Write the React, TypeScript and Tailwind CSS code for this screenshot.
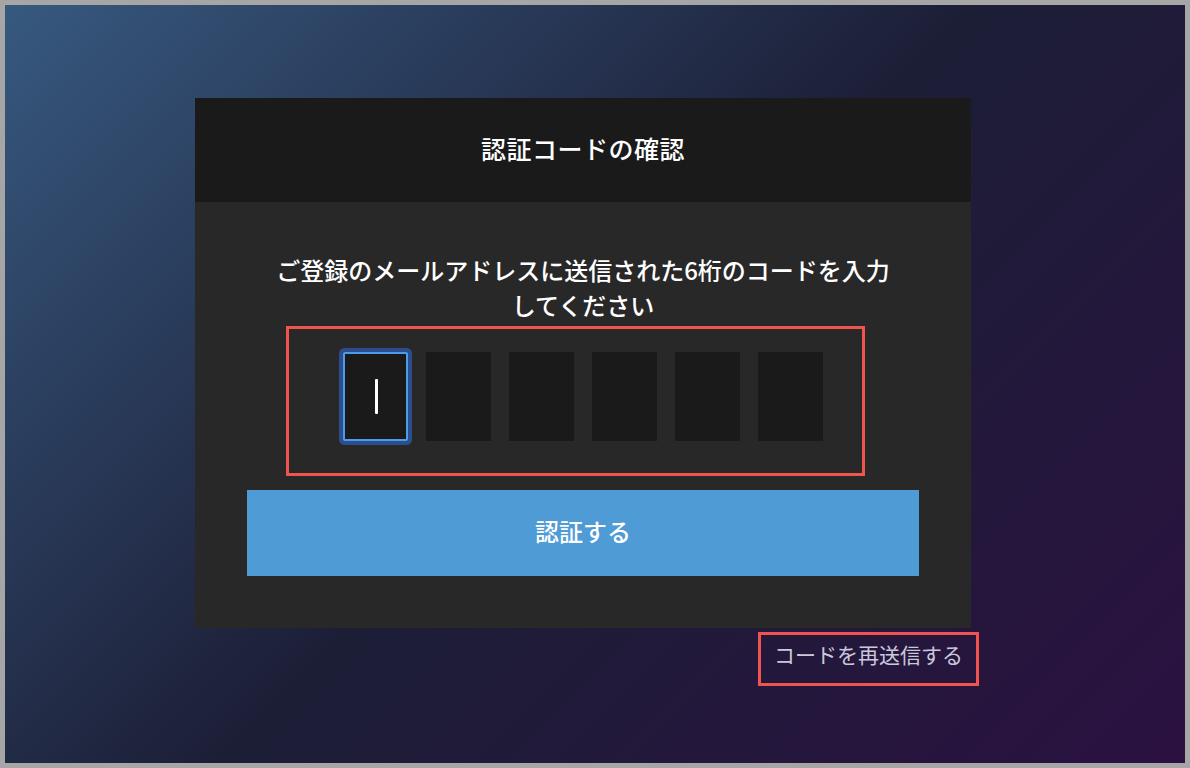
import React from "react";

export default function App() {
  const font = { fontFamily: '"Noto Sans CJK JP", "Noto Sans", sans-serif' };
  return (
    <div className="w-[1190px] h-[768px] bg-[#a6a6a6] p-[5px]" style={font}>
      <div className="w-full h-full bg-[linear-gradient(135deg,#37597f_0%,#1c1e36_50%,#2b1141_100%)] flex flex-col pt-[93px] pl-[190px]">
        <div className="w-[776px] flex flex-col">
          <div className="h-[104px] bg-[#1a1a1a] flex items-center justify-center pb-[4px]">
            <h1 className="text-white text-[25px] font-medium tracking-[0.5px] leading-none">認証コードの確認</h1>
          </div>
          <div className="bg-[#282828] pt-[50px] pb-[52px] px-[52px] flex flex-col items-center">
            <p className="text-white text-[24px] font-medium leading-[35px] text-center w-[630px]">
              ご登録のメールアドレスに送信された6桁のコードを入力してください
            </p>
            <div className="relative mt-[30px] flex gap-[18px]">
              <div className="absolute left-[-57px] right-[-42px] top-[-26px] bottom-[-35px] border-[3px] border-[#f0544f] pointer-events-none" />
              <div className="relative w-[65px] h-[89px] bg-[#1a1a1a] border-2 border-[#4b9de9] shadow-[0_0_0_4px_#2c4e8c] rounded-[2px] flex items-center justify-center">
                <div className="w-[3px] h-[35px] bg-white rounded-[1px] ml-[2px]" />
              </div>
              {[0, 1, 2, 3, 4].map((i) => (
                <div key={i} className="w-[65px] h-[89px] bg-[#1a1a1a]" />
              ))}
            </div>
            <button className="mt-[49px] w-full h-[86px] bg-[#4f9bd5] text-white text-[24px] font-medium flex items-center justify-center pb-[5px]">
              認証する
            </button>
          </div>
          <div className="flex justify-end mt-[4px] mr-[-8px]">
            <div className="w-[221px] h-[54px] border-[3px] border-[#f0544f] flex items-center justify-center text-[21px] text-[#ccc8dc] pb-[8px]">
              コードを再送信する
            </div>
          </div>
        </div>
      </div>
    </div>
  );
}
